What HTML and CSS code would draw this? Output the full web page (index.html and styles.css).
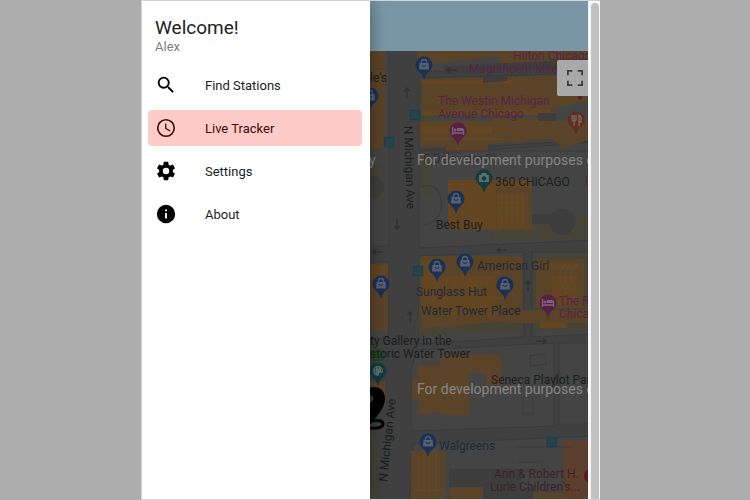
FILE: index.html
```html
<!DOCTYPE html>
<html lang="en">
<head>
<meta charset="utf-8">
<title>Live Tracker</title>
<link rel="stylesheet" href="styles.css">
</head>
<body>
<div class="frame">
  <aside class="drawer">
    <header class="greeting">
      <h1 class="greeting-title">Welcome!</h1>
      <p class="greeting-name">Alex</p>
    </header>
    <nav class="menu">
      <a class="menu-item" href="#find">
        <svg class="icon" viewBox="0 0 24 24"><path d="M15.5 14h-.79l-.28-.27A6.47 6.47 0 0 0 16 9.5 6.5 6.5 0 1 0 9.5 16c1.61 0 3.09-.59 4.23-1.57l.27.28v.79l5 4.99L20.49 19l-4.99-5zm-6 0C7.01 14 5 11.99 5 9.5S7.01 5 9.5 5 14 7.01 14 9.5 11.99 14 9.5 14z"/></svg>
        <span>Find Stations</span>
      </a>
      <a class="menu-item active" href="#tracker">
        <svg class="icon" viewBox="0 0 24 24"><g fill="none" stroke="#3d0909"><circle cx="12" cy="12" r="9" stroke-width="1.800"/><path d="M11.700 7v5.500l4.800 2.700" stroke-width="1.400"/></g></svg>
        <span>Live Tracker</span>
      </a>
      <a class="menu-item" href="#settings">
        <svg class="icon" viewBox="0 0 24 24"><path d="M12 15.500A3.500 3.500 0 0 1 8.500 12 3.500 3.500 0 0 1 12 8.500a3.500 3.500 0 0 1 3.500 3.500 3.500 3.500 0 0 1-3.500 3.500m7.430-2.530c.04-.32.07-.64.07-.97s-.03-.66-.07-1l2.110-1.630c.19-.15.24-.42.12-.64l-2-3.460c-.12-.22-.39-.31-.61-.22l-2.490 1c-.52-.39-1.060-.73-1.690-.98l-.37-2.650A.506.506 0 0 0 14 2h-4c-.25 0-.46.18-.5.42l-.37 2.650c-.63.25-1.170.59-1.690.98l-2.490-1c-.22-.09-.49 0-.61.22l-2 3.460c-.13.22-.07.49.12.64L4.570 11c-.04.34-.07.67-.07 1s.03.65.07.97l-2.110 1.660c-.19.15-.25.42-.12.64l2 3.460c.12.22.39.3.61.22l2.490-1.010c.52.4 1.060.74 1.690.99l.37 2.650c.04.24.25.42.5.42h4c.25 0 .46-.18.5-.42l.37-2.650c.63-.26 1.170-.59 1.690-.99l2.490 1.010c.22.08.49 0 .61-.22l2-3.460c.12-.22.07-.49-.12-.64z"/></svg>
        <span>Settings</span>
      </a>
      <a class="menu-item" href="#about">
        <svg class="icon" viewBox="0 0 24 24"><path d="M13 9h-2V7h2m0 10h-2v-6h2m-1-9A10 10 0 0 0 2 12a10 10 0 0 0 10 10 10 10 0 0 0 10-10A10 10 0 0 0 12 2z"/></svg>
        <span>About</span>
      </a>
    </nav>
  </aside>
  <main class="content">
    <div class="app-bar"></div>
    <section class="map" aria-label="Map">
      <svg class="map-canvas" viewBox="370 51 218 448" preserveAspectRatio="xMinYMin slice">
        <defs>
          <g id="drop"><path d="M-8.500 0a8.500 8.500 0 1 1 17 0c0 5-5 7-7 11L0 15l-1.500-4C-3.500 7-8.500 5-8.500 0z"/></g>
          <g id="shop"><use href="#drop" fill="#1b3055"/><path d="M-2.500-2v-1a2.500 2.500 0 0 1 5 0v1" fill="none" stroke="#566071" stroke-width="1.300"/><path d="M-4.500-2h9l.5 6.500H-5z" fill="#566071"/><path d="M-2 0q2 3 4 0" fill="none" stroke="#1b3055" stroke-width="1.200"/></g>
          <g id="hotel"><use href="#drop" fill="#552044"/><path d="M-5.500-4v8M-5.500 2h11v2M5.500 2V-1" fill="none" stroke="#7d6276" stroke-width="1.300"/><path d="M-1-3h5q2 0 2 3H-1z" fill="#7d6276"/><circle cx="-3" cy="-1" r="1.500" fill="#7d6276"/></g>
          <g id="camera"><use href="#drop" fill="#143b3d"/><path d="M-5-3h2l1-2h4l1 2h2v7H-5z" fill="#5c6e6f"/><circle cy=".5" r="2.200" fill="#143b3d"/></g>
          <g id="stop"><rect x="-4.500" y="-4.500" width="9" height="9" fill="#35403f" stroke="#17414d" stroke-width="1.500"/><path d="M-2.500-2.500h5v4h-5zM-2.500 0h5M-2 3h1M1 3h1" fill="none" stroke="#1d4652"/></g>
          <g id="arrow"><path d="M5 0H-5M-2-2.500L-5 0l3 2.500" fill="none" stroke="#303030" stroke-width="1.300"/></g>
        </defs>
        <rect x="370" y="51" width="900" height="448" fill="#404040"/>
        <g fill="#444" stroke="#3a3a3a">
          <path d="M365 51h24v195h-24zM365 262h23v76h-23zM419 51h175v15l-175 6zM419 78l175-5v67l-175 10zM419 155l175-13v98l-175 8zM419 256l105-4v85l-105 7zM532 252h62v82l-62 3zM417 350l137-7v83l-143 5v-62zM559 343h35v81h-35zM413 444l181-8v70H409zM365 435h10v70h-10z"/>
        </g>
        <path fill="#464337" d="M365 66h20v85h-20zM420 78h14v71h-14zM420 156h12v40h-12zM365 165h19v36h-19zM491 216h97v24h-97zM419 258h104v72l-104 6zM534 255h54v76h-54zM370 440h6v60h-6zM500 51h88v17h-88z"/>
        <g fill="#5b4328">
          <path d="M370 51h15v17h-15zM417 51h91v5l-91 8zM500 51h88v6l-88 9zM422 79l166-4v26l-37 8v5l-129 2zM370 69h15v79h-15zM420 121h72v-4l59 2v3l37-4v22l-24 8-13-9-63 5v8h-42v-6h-26zM448 180h84v50h-84zM370 264h18v67h-18zM421 256h101v64l-101 9zM536 259h49v49h-49zM505 310h83v13h-83zM440 355h61v30h-15v-12h-17v42h-18l-12-3-20 3v-16h-7v-20h6v-14h22zM411 451h34v48h-34zM450 486h33v13h-33zM533 493h31v6h-31z"/>
        </g>
        <path fill="#5e3e2c" d="M564 441h24v58h-24z"/>
        <g fill="#634621">
          <path d="M422 80h90v4h-90zM422 126h70v8h-70zM422 110h128v5H422zM448 180h84v7h-84zM448 187h48v42h-48zM497 194h28v34h-28zM370 265h18v10h-18zM421 261h18v53h-18zM441 276h54v39h-54zM536 263h42v6h-42zM552 276h25v28h-25zM540 323h26v5h-26z"/>
        </g>
        <g fill="none" stroke="#604b2a">
          <path d="M422 139h82M497 198h30M497 203h28M496 208h30M502 192v35M507 193v34M512 190v36M517 193v34M522 192v34M462 202v25M472 192v32M440 264v44M455 275v35M420 298h88M566 265q-13 10 0 25M571 265q-13 10 0 25M577 265q-13 10 0 25M418 455v34M424 450v42M430 450v42M436 450v42M414 490h29"/>
        </g>
        <g fill="#3d3d3d">
          <path d="M444 66l144-7v8l-144 7zM483 77l24-3v7l-24 2zM538 113h18v8h-18zM449 469h72v18h-72zM483 487h50v12h-50zM532 214h30v10h-30z"/>
          <circle cx="562" cy="222" r="13"/>
          <circle cx="373" cy="187" r="11" fill="#3e3e3b"/>
        </g>
        <path fill="none" stroke="#3b3b3b" d="M421 187q17-6 20 13t-16 25M421 151h167M530 356l15-2 1 10-16 2zM523 397h10v17h-10zM517 447h55M518 462h24v9h-24"/>
        <path fill="#5b4328" d="M370 381h15v26h-15z"/>
        <path fill="#25472a" d="M370 350h14v11h-14zM370 395h8v30h-8z"/>
        <use href="#arrow" x="452" y="70"/><use href="#arrow" x="502" y="250"/><use href="#arrow" x="378" y="252"/>
        <use href="#arrow" transform="translate(407 93) rotate(90)"/><use href="#arrow" transform="translate(397 224) rotate(-90)"/>
        <use href="#arrow" transform="translate(410 317) rotate(90)"/><use href="#arrow" transform="translate(528 286) rotate(90)"/><use href="#arrow" transform="translate(541 341) rotate(180)"/>
        <use href="#stop" x="415" y="115"/><use href="#stop" x="389" y="142"/><use href="#stop" x="418" y="271"/><use href="#stop" x="552" y="442"/>
        <use href="#shop" x="424" y="65"/><use href="#shop" x="370" y="96"/><use href="#shop" x="456" y="199"/><use href="#shop" x="381" y="284"/>
        <use href="#shop" x="437" y="267"/><use href="#shop" x="465" y="262"/><use href="#shop" x="505" y="285"/><use href="#shop" x="428" y="442"/>
        <use href="#hotel" x="458" y="131"/><use href="#hotel" x="548" y="303"/>
        <use href="#camera" x="484" y="178"/>
        <g transform="translate(378 371)"><use href="#drop" fill="#143b3d"/><path d="M0-5a5 5 0 1 0 0 10q2-1 1-3h2q2 0 2-2a5 5 0 0 0-5-5z" fill="#5c6e6f"/><path d="M-3 1h1M-3-2h1M0-3h1M3-1h1" stroke="#143b3d" stroke-width="1.500"/></g>
        <g transform="translate(576 120)"><use href="#drop" fill="#5b2f1f"/><path d="M-4-5v4q0 2 2 2v5M-2-5v6M0-5v4q0 2-2 2M3 6v-11q3 2 2 7H3" fill="none" stroke="#7d685f" stroke-width="1.300"/></g>
        <path d="M364 394c3-10 21-10 21 5 0 10-9 17-15 26l-6-8 6-6v-8q7-5 0-8z"/>
        <path d="M369 421q14-2 14 3t-14 4" fill="none" stroke="#000" stroke-width="3"/>
        <circle cx="592" cy="476" r="8" fill="#571b24"/>
        <path fill="#552044" d="M578 95h4v3l-2 2-2-2z"/>
        <g class="place">
          <text class="street" x="423" y="163">E Delaware Pl</text>
          <text x="370" y="82">le's</text>
          <text transform="translate(404 126) rotate(88)">N Michigan Ave</text>
          <text transform="translate(387 482) rotate(-84)">N Michigan Ave</text>
          <text x="495" y="186">360 CHICAGO</text>
          <text x="436" y="229">Best Buy</text>
          <text x="370" y="345">ty Gallery in the</text>
          <text x="370" y="358">storic Water Tower</text>
          <text x="491" y="384">Seneca Playlot Park</text>
        </g>
        <g class="place store">
          <text x="477" y="270">American Girl</text>
          <text x="416" y="296">Sunglass Hut</text>
          <text x="421" y="315">Water Tower Place</text>
          <text x="439" y="450">Walgreens</text>
        </g>
        <g class="place lodging">
          <text x="513" y="60">Hilton Chicago</text>
          <text x="469" y="73">Magnificent Mile</text>
          <text x="438" y="105">The Westin Michigan</text>
          <text x="438" y="118">Avenue Chicago</text>
          <text x="559" y="305">The Ritz</text>
          <text x="559" y="318">Chicago</text>
          <text x="585" y="185">R</text>
        </g>
        <g class="place hospital">
          <text x="494" y="478">Ann &amp; Robert H.</text>
          <text x="490" y="491">Lurie Children's...</text>
        </g>
        <g class="notice">
          <text x="369" y="165">y</text>
          <text x="417" y="165">For development purposes only</text>
          <text x="417" y="394">For development purposes only</text>
        </g>
      </svg>
      <button class="fullscreen" type="button" aria-label="Toggle fullscreen">
        <svg class="fullscreen-icon" viewBox="0 0 18 18"><path d="M0 0v6h2V2h4V0zm16 0h-4v2h4v4h2V0zm0 16h-4v2h6v-6h-2zM2 12H0v6h6v-2H2z"/></svg>
      </button>
    </section>
  </main>
  <div class="scroll-track"><div class="scroll-thumb"></div></div>
</div>
</body>
</html>
```

FILE: styles.css
```css
* {
  box-sizing: border-box;
}

body {
  margin: 0;
  min-height: 100vh;
  padding: 0 20% 0 18.8%;
  display: flex;
  background: #adadad;
  font-family: Roboto, sans-serif;
  color: #212121;
}

.frame {
  flex: 1;
  min-width: 0;
  display: flex;
  overflow: hidden;
  border: 1px solid #d2d2d2;
  border-right: 0;
}

.drawer {
  position: relative;
  z-index: 1;
  flex: 0 0 228px;
  background: #fff;
  box-shadow: 0 0 16px rgba(0, 0, 0, 0.4);
}

.greeting {
  padding: 15px 13px 12px;
}

.greeting-title {
  margin: 0;
  font-size: 19px;
  line-height: 23px;
  font-weight: 400;
}

.greeting-name {
  margin: 0;
  font-size: 13px;
  line-height: 16px;
  color: #7d7d7d;
}

.menu {
  display: grid;
  gap: 7px;
  padding: 0 8px 0 6px;
}

.menu-item {
  display: flex;
  align-items: center;
  gap: 28px;
  height: 36px;
  padding: 0 7px;
  border-radius: 4px;
  font-size: 13px;
  color: #1d1d1d;
  text-decoration: none;
}

.menu-item.active {
  background: #ffcbc9;
  color: #3d0909;
}

.icon {
  width: 22px;
  height: 22px;
  fill: #000;
}

.content {
  flex: 1;
  min-width: 0;
  display: flex;
  flex-direction: column;
}

.app-bar {
  height: 50px;
  background: #7896a5;
}

.map {
  position: relative;
  flex: 1;
  overflow: hidden;
  background: #404040;
}

.map-canvas {
  position: absolute;
  inset: 0;
  width: 100%;
  height: 100%;
}

.place {
  font-size: 12px;
  fill: #191d20;
}

.street {
  fill: #303030;
}

.store {
  fill: #1c2838;
}

.lodging {
  fill: #572344;
}

.hospital {
  fill: #352426;
}

.notice {
  font-size: 14px;
  fill: #868686;
}

.fullscreen {
  position: absolute;
  top: 9px;
  right: -5px;
  width: 36px;
  height: 36px;
  padding: 0;
  display: grid;
  place-items: center;
  border: 0;
  border-radius: 2px;
  background: #a9a9a9;
}

.fullscreen-icon {
  width: 16px;
  height: 16px;
  fill: #3c3c3c;
}

.scroll-track {
  flex: 0 0 12px;
  padding: 2px 1px 0 3px;
  background: #f6f6f6;
}

.scroll-thumb {
  height: 100%;
  border-radius: 4px 4px 0 0;
  background: #c1c1c1;
}
```
